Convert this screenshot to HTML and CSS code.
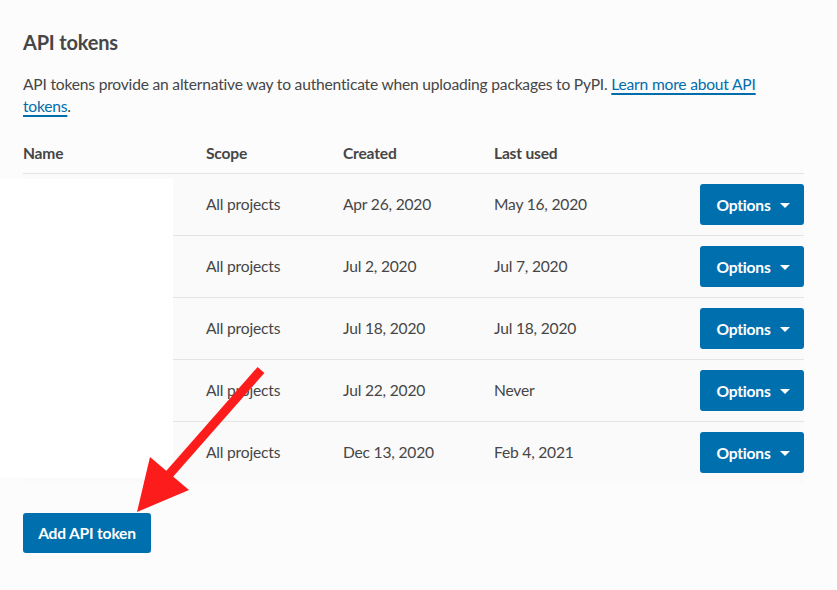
FILE: index.html
```html
<!DOCTYPE html>
<html lang="en">
<head>
<meta charset="utf-8">
<title>API tokens</title>
<link rel="stylesheet" href="styles.css">
</head>
<body>
<main class="section">
  <h2 class="title">API tokens</h2>
  <p class="intro">API tokens provide an alternative way to authenticate when uploading packages to PyPI. <a href="#" class="link">Learn more about API tokens</a>.</p>
  <table class="tokens">
    <colgroup>
      <col class="c-name"><col class="c-scope"><col class="c-created"><col class="c-used"><col class="c-opt">
    </colgroup>
    <thead>
      <tr><th>Name</th><th>Scope</th><th>Created</th><th>Last used</th><th></th></tr>
    </thead>
    <tbody>
      <tr><td></td><td>All projects</td><td>Apr 26, 2020</td><td>May 16, 2020</td><td class="opt"><button class="btn btn-options">Options<span class="caret"></span></button></td></tr>
      <tr><td></td><td>All projects</td><td>Jul 2, 2020</td><td>Jul 7, 2020</td><td class="opt"><button class="btn btn-options">Options<span class="caret"></span></button></td></tr>
      <tr><td></td><td>All projects</td><td>Jul 18, 2020</td><td>Jul 18, 2020</td><td class="opt"><button class="btn btn-options">Options<span class="caret"></span></button></td></tr>
      <tr><td></td><td>All projects</td><td>Jul 22, 2020</td><td>Never</td><td class="opt"><button class="btn btn-options">Options<span class="caret"></span></button></td></tr>
      <tr><td></td><td>All projects</td><td>Dec 13, 2020</td><td>Feb 4, 2021</td><td class="opt"><button class="btn btn-options">Options<span class="caret"></span></button></td></tr>
    </tbody>
  </table>
  <button class="btn btn-add">Add API token</button>
</main>
<div class="redact"></div>
<svg class="arrow" width="837" height="590" viewBox="0 0 837 590" aria-hidden="true">
  <line x1="261" y1="370" x2="166" y2="478" stroke="#fc1c1c" stroke-width="9" stroke-linecap="butt"/>
  <polygon points="150,457 137,512 189,490" fill="#fc1c1c"/>
</svg>
</body>
</html>
```
FILE: styles.css
```css
html, body {
  margin: 0;
  padding: 0;
  background: #fcfcfc;
}
body {
  font-family: "Lato", "Liberation Sans", sans-serif;
  color: #464646;
  font-size: 16px;
  width: 837px;
  height: 590px;
  overflow: hidden;
  position: relative;
}
.section {
  padding: 28px 33px 0 23px;
}
.title {
  margin: 0;
  font-size: 20px;
  line-height: 28px;
  font-weight: 700;
  color: #464646;
  letter-spacing: -0.2px;
}
.intro {
  margin: 18px 0 0;
  line-height: 21.5px;
  font-size: 15.6px;
  letter-spacing: -0.2px;
}
.link {
  color: #006dad;
  text-decoration: underline;
  text-underline-offset: 3px;
  text-decoration-thickness: 1.5px;
}
.tokens {
  margin-top: 16px;
  width: 781px;
  border-collapse: collapse;
  table-layout: fixed;
  letter-spacing: -0.2px;
}
.c-name { width: 183px; }
.c-scope { width: 137px; }
.c-created { width: 151px; }
.c-used { width: 200px; }
.c-opt { width: 110px; }
.tokens th {
  text-align: left;
  font-weight: 700;
  padding: 0;
  height: 40px;
  font-size: 15.6px;
}
.tokens td {
  padding: 0 0 1px;
  height: 60px;
  border-top: 1px solid #e4e4e4;
  font-size: 15.6px;
  background: #fafafa;
}
.tokens td.opt {
  text-align: right;
  padding: 0;
}
.btn {
  font-family: "Lato", "Liberation Sans", sans-serif;
  background: #006fae;
  color: #fff;
  border: 0;
  border-radius: 3px;
  font-weight: 700;
  font-size: 15.6px;
  letter-spacing: -0.2px;
  cursor: pointer;
}
.btn-options {
  width: 104px;
  height: 41px;
  padding: 0 0 0 2px;
  display: inline-flex;
  align-items: center;
  justify-content: center;
  gap: 9px;
  vertical-align: middle;
}
.caret {
  width: 0;
  height: 0;
  border-left: 5px solid transparent;
  border-right: 5px solid transparent;
  border-top: 5px solid #fff;
  margin-top: 2px;
}
.btn-add {
  margin-top: 30px;
  width: 128px;
  height: 40px;
  padding: 0;
}
.redact {
  position: absolute;
  left: 0;
  top: 179px;
  width: 173px;
  height: 299px;
  background: #fff;
}
.arrow {
  position: absolute;
  left: 0;
  top: 0;
  pointer-events: none;
}
```
